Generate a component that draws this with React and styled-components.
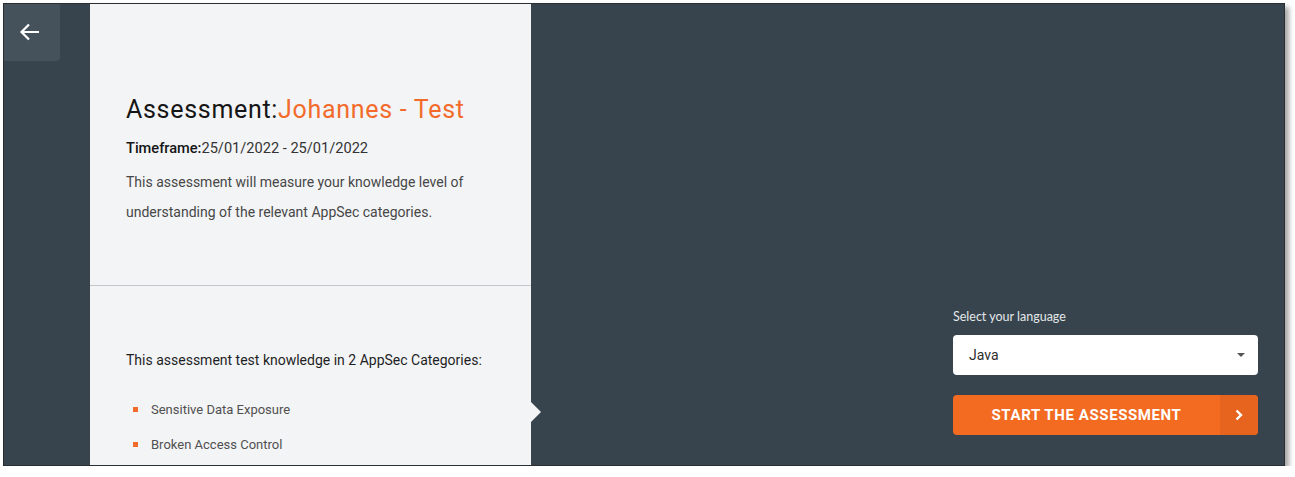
import React from 'react';
import styled, { createGlobalStyle } from 'styled-components';

const GlobalStyle = createGlobalStyle`
  body {
    margin: 0;
    background: #ffffff;
    font-family: Roboto, "Liberation Sans", sans-serif;
  }
`;

const Page = styled.div`
  padding: 3px 0 0 3px;
`;

const Frame = styled.div`
  width: 1282px;
  height: 463px;
  box-sizing: border-box;
  border: 1px solid #2a2f33;
  background: #37444d;
  box-shadow: 4px 4px 5px rgba(0, 0, 0, 0.35);
  display: flex;
`;

const Sidebar = styled.div`
  width: 86px;
  flex-shrink: 0;
`;

const BackButton = styled.button`
  width: 56px;
  height: 57px;
  border: none;
  padding: 0 4px 2px 0;
  background: #45525b;
  border-bottom-right-radius: 4px;
  display: flex;
  align-items: center;
  justify-content: center;
  cursor: pointer;
`;

const Panel = styled.div`
  width: 441px;
  flex-shrink: 0;
  background: #f3f4f6;
  position: relative;
  display: flex;
  flex-direction: column;

  &::after {
    content: '';
    position: absolute;
    left: 100%;
    top: 398px;
    border-top: 10px solid transparent;
    border-bottom: 10px solid transparent;
    border-left: 10px solid #f3f4f6;
  }
`;

const Intro = styled.div`
  height: 282px;
  box-sizing: border-box;
  padding: 91px 36px 0;
  border-bottom: 1px solid #c4c6c9;
`;

const Title = styled.h1`
  margin: 0;
  font-size: 25px;
  line-height: 30px;
  font-weight: 400;
  letter-spacing: 0.7px;
  color: #151515;
`;

const Accent = styled.span`
  color: #f26b2b;
`;

const Timeframe = styled.p`
  margin: 13px 0 0;
  font-size: 14.6px;
  line-height: 20px;
  color: #333;
`;

const Strong = styled.span`
  font-weight: 500;
  color: #151515;
`;

const Description = styled.p`
  margin: 9px 0 0;
  font-size: 14px;
  line-height: 30px;
  color: #474747;
`;

const Categories = styled.div`
  padding: 64px 36px 0;
`;

const CategoriesTitle = styled.p`
  margin: 0;
  font-size: 14px;
  line-height: 20px;
  color: #1f1f1f;
`;

const List = styled.ul`
  list-style: none;
  margin: 22px 0 0;
  padding: 0;
`;

const Item = styled.li`
  position: relative;
  padding-left: 25px;
  font-size: 13px;
  line-height: 35px;
  color: #505050;

  &::before {
    content: '';
    position: absolute;
    left: 7px;
    top: 15px;
    width: 5px;
    height: 5px;
    background: #f26b2b;
  }
`;

const Main = styled.div`
  flex: 1;
  display: flex;
  justify-content: flex-end;
  align-items: flex-end;
  padding: 0 26px 30px 0;
`;

const StartForm = styled.div`
  width: 305px;
  display: flex;
  flex-direction: column;
`;

const Label = styled.label`
  font-family: Lato, "Liberation Sans", sans-serif;
  font-size: 12.5px;
  line-height: 16px;
  color: #e4e7e9;
  margin-bottom: 10px;
`;

const Select = styled.div`
  height: 40px;
  background: #ffffff;
  border-radius: 4px;
  display: flex;
  align-items: center;
  justify-content: space-between;
  padding: 0 13px 0 16px;
  font-size: 14px;
  color: #2e2e2e;
`;

const Caret = styled.span`
  width: 0;
  height: 0;
  border-left: 4px solid transparent;
  border-right: 4px solid transparent;
  border-top: 4px solid #555;
  margin-top: -1px;
`;

const StartButton = styled.button`
  margin-top: 20px;
  height: 40px;
  border: none;
  padding: 0;
  border-radius: 4px;
  overflow: hidden;
  background: #f26b21;
  display: flex;
  cursor: pointer;
  font-family: Roboto, "Liberation Sans", sans-serif;
`;

const ButtonLabel = styled.span`
  flex: 1;
  display: flex;
  align-items: center;
  justify-content: center;
  color: #ffffff;
  font-size: 15px;
  font-weight: 700;
  letter-spacing: 0.6px;
`;

const ButtonArrow = styled.span`
  width: 38px;
  display: flex;
  align-items: center;
  justify-content: center;
  background: #e6641e;
`;

export default function App() {
  return (
    <>
      <GlobalStyle />
      <Page>
        <Frame>
          <Sidebar>
            <BackButton aria-label="Back">
              <svg width="22" height="20" viewBox="0 0 22 20" fill="none">
                <path d="M20 10H2.5M10 2.5L2.5 10l7.5 7.5" stroke="#fff" strokeWidth="2.2" />
              </svg>
            </BackButton>
          </Sidebar>

          <Panel>
            <Intro>
              <Title>
                Assessment:<Accent>Johannes - Test</Accent>
              </Title>
              <Timeframe>
                <Strong>Timeframe:</Strong>25/01/2022 - 25/01/2022
              </Timeframe>
              <Description>
                This assessment will measure your knowledge level of understanding of the relevant AppSec categories.
              </Description>
            </Intro>
            <Categories>
              <CategoriesTitle>This assessment test knowledge in 2 AppSec Categories:</CategoriesTitle>
              <List>
                <Item>Sensitive Data Exposure</Item>
                <Item>Broken Access Control</Item>
              </List>
            </Categories>
          </Panel>

          <Main>
            <StartForm>
              <Label>Select your language</Label>
              <Select>
                Java
                <Caret />
              </Select>
              <StartButton>
                <ButtonLabel>START THE ASSESSMENT</ButtonLabel>
                <ButtonArrow>
                  <svg width="8" height="12" viewBox="0 0 8 12" fill="none">
                    <path d="M1.5 1.5L6 6l-4.5 4.5" stroke="#fff" strokeWidth="2.4" />
                  </svg>
                </ButtonArrow>
              </StartButton>
            </StartForm>
          </Main>
        </Frame>
      </Page>
    </>
  );
}
